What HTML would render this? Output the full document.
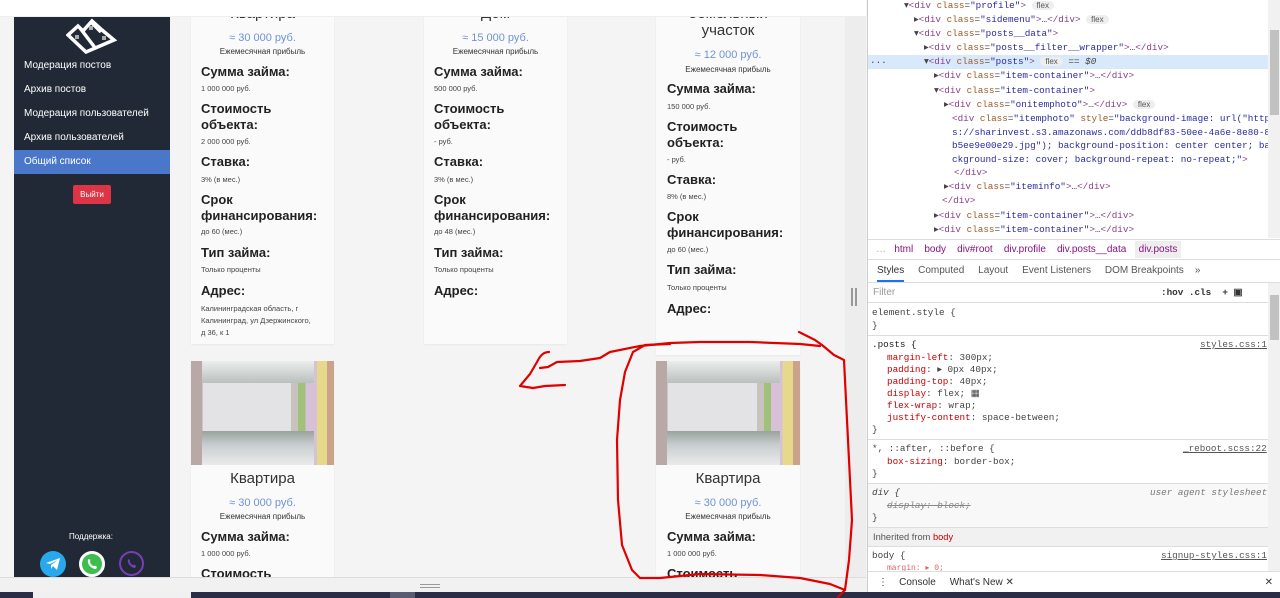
<!DOCTYPE html>
<html><head><meta charset="utf-8"><style>
*{box-sizing:border-box;margin:0;padding:0}
body{width:1280px;height:598px;overflow:hidden;background:#f4f4f4;font-family:"Liberation Sans",Arial,sans-serif;position:relative}
.a{position:absolute;white-space:nowrap}
.side{position:absolute;left:14px;top:0;width:156px;height:577px;background:#212936}
.menu{position:absolute;left:24px;color:#fff;font-size:10px}
.card{position:absolute;background:#fafafa;box-shadow:0 1px 2px rgba(0,0,0,.05)}
.t{position:absolute;font-size:15px;color:#333;text-align:center;width:143px}
.p{position:absolute;font-size:11px;color:#6e93d8;text-align:center;width:143px}
.s{position:absolute;font-size:8px;color:#333;text-align:center;width:143px}
.l{position:absolute;font-size:13px;font-weight:bold;color:#222;line-height:16px}
.v{position:absolute;font-size:7.5px;color:#444;line-height:12px}
.dt{position:absolute;left:867px;top:0;width:413px;height:592px;background:#fff;border-left:1px solid #ccc;font-family:"Liberation Mono",monospace;font-size:9.3px;color:#444}
.dt .r{position:absolute;white-space:nowrap}
.tg{color:#8b3f8a}.at{color:#9a5a2a}.av{color:#2a2aa0}
.badge{display:inline-block;font-family:"Liberation Sans",sans-serif;font-size:8px;background:#eee;border-radius:7px;padding:0 5px;color:#555}
.pn{color:#c80000}
.sans{font-family:"Liberation Sans",sans-serif}
.photo{position:absolute;width:143px;height:104px;background:linear-gradient(90deg,#b8a9a6 0 8%,#e3e3e6 8% 70%,#c9c3c0 70% 75%,#9fc17a 75% 80%,#d8c1d8 80% 88%,#e6d98c 88% 95%,#c9a38a 95%)}
.photo:before{content:"";position:absolute;left:11px;right:20px;top:0;height:22px;background:linear-gradient(#eceded,#b9c0bd)}
.photo:after{content:"";position:absolute;left:11px;right:20px;top:70px;height:34px;background:linear-gradient(#9aa39d,#c7cdcf 40%,#eaeaea)}
</style></head><body>
<div class="a" style="left:0;top:0;width:866px;height:17px;background:#fff;z-index:5;border-bottom:1px solid #eee"></div>
<div class="a" style="left:845px;top:17px;width:21px;height:560px;background:#ededed"></div>
<div class="a" style="left:851px;top:288px;width:2px;height:18px;background:#999"></div>
<div class="a" style="left:855px;top:288px;width:2px;height:18px;background:#999"></div>

<div class="side">
<svg style="position:absolute;left:52px;top:18px" width="52" height="36" viewBox="0 0 52 36"><g fill="none" stroke="#fff" stroke-width="3.5" stroke-linejoin="miter"><path d="M2 17 L12 8 L17 13 L26 3 L36 12 L48 22 L20 34 Z"/><path d="M14 10 L30 31"/><path d="M25 4 L35 14"/></g><rect x="9" y="17" width="4" height="4" fill="#aaa"/><rect x="23" y="8" width="4" height="4" fill="#aaa"/><rect x="36" y="18" width="4" height="4" fill="#aaa"/></svg>
</div>
<div class="menu a" style="top:60px">Модерация постов</div>
<div class="menu a" style="top:84px">Архив постов</div>
<div class="menu a" style="top:108px">Модерация пользователей</div>
<div class="menu a" style="top:132px">Архив пользователей</div>
<div class="a" style="left:14px;top:150px;width:156px;height:24px;background:#4a77c9"></div>
<div class="menu a" style="top:156px">Общий список</div>
<div class="a" style="left:73px;top:185px;width:38px;height:19px;background:#dc3545;border-radius:2px;color:#fff;font-size:8px;text-align:center;line-height:19px">Выйти</div>
<div class="a" style="left:69px;top:532px;color:#fff;font-size:8px">Поддержка:</div>
<div class="a" style="left:40px;top:551px;width:26px;height:26px;border-radius:50%;background:#29a9eb"></div>
<svg class="a" style="left:45px;top:557px" width="16" height="14" viewBox="0 0 16 14"><path d="M1 6 L15 1 L12 13 L8 9 L6 12 L6 8 L13 3 L5 7 Z" fill="#fff"/></svg>
<div class="a" style="left:79px;top:551px;width:26px;height:26px;border-radius:50%;border:3px solid #fff;background:#3cbd4d"></div>
<svg class="a" style="left:85px;top:557px" width="14" height="14" viewBox="0 0 14 14"><path d="M3 3 C4 1 6 3 5 5 C6 8 8 9 9 9 C11 8 13 10 11 12 C7 12 2 8 3 3Z" fill="#fff"/></svg>
<div class="a" style="left:119px;top:551px;width:25px;height:25px;border-radius:50%;border:2.5px solid #7b3db6"></div>
<svg class="a" style="left:125px;top:557px" width="13" height="13" viewBox="0 0 13 13"><path d="M3 3 C4 1 5 3 5 5 C6 7 7 8 8 8 C10 7 12 9 10 11 C7 11 2 7 3 3Z" fill="#7b3db6"/></svg>

<div class="card" style="left:191px;top:0;width:143px;height:344px"></div>
<div class="card" style="left:424px;top:0;width:143px;height:344px"></div>
<div class="card" style="left:656px;top:0;width:144px;height:355px"></div>

<div class="t" style="left:191px;top:5px">Квартира</div>
<div class="p" style="left:191px;top:32px">≈ 30 000 руб.</div>
<div class="s" style="left:191px;top:47px">Ежемесячная прибыль</div>
<div class="l a" style="left:201px;top:64px">Сумма займа:</div>
<div class="v a" style="left:201px;top:83px">1 000 000 руб.</div>
<div class="l a" style="left:201px;top:101px">Стоимость<br>объекта:</div>
<div class="v a" style="left:201px;top:136px">2 000 000 руб.</div>
<div class="l a" style="left:201px;top:154px">Ставка:</div>
<div class="v a" style="left:201px;top:174px">3% (в мес.)</div>
<div class="l a" style="left:201px;top:192px">Срок<br>финансирования:</div>
<div class="v a" style="left:201px;top:226px">до 60 (мес.)</div>
<div class="l a" style="left:201px;top:245px">Тип займа:</div>
<div class="v a" style="left:201px;top:264px">Только проценты</div>
<div class="l a" style="left:201px;top:283px">Адрес:</div>
<div class="v a" style="left:201px;top:303px">Калининградская область, г<br>Калининград, ул Дзержинского,<br>д 36, к 1</div>

<div class="t" style="left:424px;top:5px">Дом</div>
<div class="p" style="left:424px;top:32px">≈ 15 000 руб.</div>
<div class="s" style="left:424px;top:47px">Ежемесячная прибыль</div>
<div class="l a" style="left:434px;top:64px">Сумма займа:</div>
<div class="v a" style="left:434px;top:83px">500 000 руб.</div>
<div class="l a" style="left:434px;top:101px">Стоимость<br>объекта:</div>
<div class="v a" style="left:434px;top:136px">- руб.</div>
<div class="l a" style="left:434px;top:154px">Ставка:</div>
<div class="v a" style="left:434px;top:174px">3% (в мес.)</div>
<div class="l a" style="left:434px;top:192px">Срок<br>финансирования:</div>
<div class="v a" style="left:434px;top:226px">до 48 (мес.)</div>
<div class="l a" style="left:434px;top:245px">Тип займа:</div>
<div class="v a" style="left:434px;top:264px">Только проценты</div>
<div class="l a" style="left:434px;top:283px">Адрес:</div>

<div class="t" style="left:656px;top:5px;width:144px">Земельный</div>
<div class="t" style="left:656px;top:22px;width:144px">участок</div>
<div class="p" style="left:656px;top:49px;width:144px">≈ 12 000 руб.</div>
<div class="s" style="left:656px;top:65px;width:144px">Ежемесячная прибыль</div>
<div class="l a" style="left:667px;top:81px">Сумма займа:</div>
<div class="v a" style="left:667px;top:101px">150 000 руб.</div>
<div class="l a" style="left:667px;top:119px">Стоимость<br>объекта:</div>
<div class="v a" style="left:667px;top:154px">- руб.</div>
<div class="l a" style="left:667px;top:172px">Ставка:</div>
<div class="v a" style="left:667px;top:191px">8% (в мес.)</div>
<div class="l a" style="left:667px;top:209px">Срок<br>финансирования:</div>
<div class="v a" style="left:667px;top:244px">до 60 (мес.)</div>
<div class="l a" style="left:667px;top:262px">Тип займа:</div>
<div class="v a" style="left:667px;top:282px">Только проценты</div>
<div class="l a" style="left:667px;top:301px">Адрес:</div>

<div class="card" style="left:191px;top:361px;width:143px;height:230px"></div>
<div class="photo" style="left:191px;top:361px"></div>
<div class="t" style="left:191px;top:470px">Квартира</div>
<div class="p" style="left:191px;top:497px">≈ 30 000 руб.</div>
<div class="s" style="left:191px;top:512px">Ежемесячная прибыль</div>
<div class="l a" style="left:201px;top:529px">Сумма займа:</div>
<div class="v a" style="left:201px;top:548px">1 000 000 руб.</div>
<div class="l a" style="left:201px;top:566px">Стоимость</div>

<div class="card" style="left:656px;top:361px;width:144px;height:230px"></div>
<div class="photo" style="left:656px;top:361px;width:144px"></div>
<div class="t" style="left:656px;top:470px;width:144px">Квартира</div>
<div class="p" style="left:656px;top:497px;width:144px">≈ 30 000 руб.</div>
<div class="s" style="left:656px;top:512px;width:144px">Ежемесячная прибыль</div>
<div class="l a" style="left:667px;top:529px">Сумма займа:</div>
<div class="v a" style="left:667px;top:548px">1 000 000 руб.</div>
<div class="l a" style="left:667px;top:566px">Стоимость</div>

<div class="a" style="left:0;top:577px;width:866px;height:15px;background:#f1f1f1;border-top:1px solid #ddd"></div>
<div class="a" style="left:420px;top:584px;width:20px;height:1px;background:#999"></div>
<div class="a" style="left:420px;top:587px;width:20px;height:1px;background:#999"></div>
<div class="a" style="left:0;top:592px;width:1280px;height:6px;background:#2b2d48"></div>
<div class="a" style="left:33px;top:592px;width:158px;height:6px;background:#f0f0f0"></div>
<div class="a" style="left:390px;top:592px;width:25px;height:6px;background:#5a5c74"></div>

<div class="dt">
<div class="r" style="left:0;top:55px;width:400px;height:14px;background:#d7e9fb"></div>
<div class="r" style="left:36px;top:0">▾<span class="tg">&lt;div</span> <span class="at">class</span>=<span class="av">"profile"</span><span class="tg">&gt;</span> <span class="badge">flex</span></div>
<div class="r" style="left:46px;top:14px">▸<span class="tg">&lt;div</span> <span class="at">class</span>=<span class="av">"sidemenu"</span><span class="tg">&gt;</span>…<span class="tg">&lt;/div&gt;</span> <span class="badge">flex</span></div>
<div class="r" style="left:46px;top:28px">▾<span class="tg">&lt;div</span> <span class="at">class</span>=<span class="av">"posts__data"</span><span class="tg">&gt;</span></div>
<div class="r" style="left:56px;top:42px">▸<span class="tg">&lt;div</span> <span class="at">class</span>=<span class="av">"posts__filter__wrapper"</span><span class="tg">&gt;</span>…<span class="tg">&lt;/div&gt;</span></div>
<div class="r" style="left:2px;top:57px">···</div>
<div class="r" style="left:56px;top:56px">▾<span class="tg">&lt;div</span> <span class="at">class</span>=<span class="av">"posts"</span><span class="tg">&gt;</span> <span class="badge">flex</span> == <i>$0</i></div>
<div class="r" style="left:66px;top:70px">▸<span class="tg">&lt;div</span> <span class="at">class</span>=<span class="av">"item-container"</span><span class="tg">&gt;</span>…<span class="tg">&lt;/div&gt;</span></div>
<div class="r" style="left:66px;top:85px">▾<span class="tg">&lt;div</span> <span class="at">class</span>=<span class="av">"item-container"</span><span class="tg">&gt;</span></div>
<div class="r" style="left:76px;top:99px">▸<span class="tg">&lt;div</span> <span class="at">class</span>=<span class="av">"onitemphoto"</span><span class="tg">&gt;</span>…<span class="tg">&lt;/div&gt;</span> <span class="badge">flex</span></div>
<div class="r" style="left:84px;top:113px"><span class="tg">&lt;div</span> <span class="at">class</span>=<span class="av">"itemphoto"</span> <span class="at">style</span>=<span class="av">"background-image: url("http</span></div>
<div class="r av" style="left:84px;top:127px">s://sharinvest.s3.amazonaws.com/ddb8df83-50ee-4a6e-8e80-8</div>
<div class="r av" style="left:84px;top:140px">b5ee9e00e29.jpg"); background-position: center center; ba</div>
<div class="r av" style="left:84px;top:154px">ckground-size: cover; background-repeat: no-repeat;"<span class="tg">&gt;</span></div>
<div class="r tg" style="left:86px;top:167px">&lt;/div&gt;</div>
<div class="r" style="left:76px;top:181px">▸<span class="tg">&lt;div</span> <span class="at">class</span>=<span class="av">"iteminfo"</span><span class="tg">&gt;</span>…<span class="tg">&lt;/div&gt;</span></div>
<div class="r tg" style="left:74px;top:195px">&lt;/div&gt;</div>
<div class="r" style="left:66px;top:210px">▸<span class="tg">&lt;div</span> <span class="at">class</span>=<span class="av">"item-container"</span><span class="tg">&gt;</span>…<span class="tg">&lt;/div&gt;</span></div>
<div class="r" style="left:66px;top:224px">▸<span class="tg">&lt;div</span> <span class="at">class</span>=<span class="av">"item-container"</span><span class="tg">&gt;</span>…<span class="tg">&lt;/div&gt;</span></div>
<div class="r" style="left:400px;top:0;width:13px;height:238px;background:#f1f1f1"></div>
<div class="r" style="left:402px;top:30px;width:9px;height:85px;background:#c1c1c1"></div>
<div class="r sans" style="left:0;top:239px;width:413px;height:21px;border-top:1px solid #ddd;border-bottom:1px solid #ddd;font-size:10px;color:#881280;padding-top:4px">
<span style="color:#aaa;margin-left:8px">…</span>&nbsp;&nbsp;&nbsp;html&nbsp;&nbsp;&nbsp; body&nbsp;&nbsp;&nbsp; div#root&nbsp;&nbsp;&nbsp; div.profile&nbsp;&nbsp;&nbsp; div.posts__data&nbsp;&nbsp; <span style="background:#eee;padding:3px 4px">div.posts</span></div>
<div class="r sans" style="left:0;top:261px;width:413px;height:22px;border-bottom:1px solid #ddd;font-size:10px;color:#555;padding-top:4px">
<span style="margin-left:9px;color:#333;border-bottom:2px solid #1a73e8;padding-bottom:4px">Styles</span>&nbsp;&nbsp;&nbsp;&nbsp; Computed&nbsp;&nbsp;&nbsp;&nbsp; Layout&nbsp;&nbsp;&nbsp;&nbsp; Event Listeners&nbsp;&nbsp;&nbsp;&nbsp; DOM Breakpoints&nbsp;&nbsp;&nbsp; »</div>
<div class="r sans" style="left:5px;top:287px;width:280px;height:14px;color:#999;font-size:10px">Filter</div>
<div class="r" style="left:293px;top:287px;color:#333;font-weight:bold">:hov .cls &nbsp;+ ▣</div>
<div class="r" style="left:0;top:302px;width:400px;height:1px;background:#ddd"></div>
<div class="r" style="left:4px;top:307px">element.style {</div>
<div class="r" style="left:4px;top:320px">}</div>
<div class="r" style="left:0;top:335px;width:400px;height:1px;background:#ddd"></div>
<div class="r" style="left:4px;top:339px;color:#222">.posts {</div>
<div class="r" style="left:332px;top:339px;text-decoration:underline;color:#555">styles.css:1</div>
<div class="r" style="left:19px;top:352px"><span class="pn">margin-left</span>: 300px;</div>
<div class="r" style="left:19px;top:364px"><span class="pn">padding</span>: ▸ 0px 40px;</div>
<div class="r" style="left:19px;top:376px"><span class="pn">padding-top</span>: 40px;</div>
<div class="r" style="left:19px;top:388px"><span class="pn">display</span>: flex; ▦</div>
<div class="r" style="left:19px;top:400px"><span class="pn">flex-wrap</span>: wrap;</div>
<div class="r" style="left:19px;top:412px"><span class="pn">justify-content</span>: space-between;</div>
<div class="r" style="left:4px;top:424px">}</div>
<div class="r" style="left:0;top:439px;width:400px;height:1px;background:#ddd"></div>
<div class="r" style="left:4px;top:443px">*, ::after, ::before {</div>
<div class="r" style="left:315px;top:443px;text-decoration:underline;color:#555">_reboot.scss:22</div>
<div class="r" style="left:19px;top:456px"><span class="pn">box-sizing</span>: border-box;</div>
<div class="r" style="left:4px;top:468px">}</div>
<div class="r" style="left:0;top:483px;width:400px;height:44px;background:#f8f8f8;border-top:1px solid #ddd"></div>
<div class="r" style="left:4px;top:487px"><i>div {</i></div>
<div class="r" style="left:282px;top:487px;color:#777"><i>user agent stylesheet</i></div>
<div class="r" style="left:19px;top:500px;text-decoration:line-through;color:#888"><i>display: block;</i></div>
<div class="r" style="left:4px;top:512px">}</div>
<div class="r sans" style="left:0;top:527px;width:400px;height:20px;background:#f1f1f1;border-top:1px solid #ddd;border-bottom:1px solid #ddd;padding:4px 5px;color:#555">Inherited from <span style="color:#c80000">body</span></div>
<div class="r" style="left:4px;top:550px">body {</div>
<div class="r" style="left:293px;top:550px;text-decoration:underline;color:#555">signup-styles.css:1</div>
<div class="r" style="left:19px;top:563px;color:#d66;font-size:8px">margin: ▸ 0;</div>
<div class="r" style="left:400px;top:283px;width:13px;height:288px;background:#f1f1f1"></div>
<div class="r" style="left:402px;top:295px;width:9px;height:45px;background:#c1c1c1"></div>
<div class="r sans" style="left:0;top:571px;width:413px;height:21px;background:#fff;border-top:1px solid #ddd;font-size:10px;color:#333;padding-top:5px"><span style="margin-left:10px">⋮</span>&nbsp;&nbsp;&nbsp; Console&nbsp;&nbsp;&nbsp;&nbsp; What's New ✕<span style="position:absolute;right:8px">✕</span></div>
</div>

<svg class="a" style="left:0;top:0;z-index:10" width="1280" height="598" viewBox="0 0 1280 598">
<g fill="none" stroke="#e00000" stroke-width="2.2" stroke-linecap="round" stroke-linejoin="round">
<path d="M549 352 C543 352 540 356 537 362 L530 374 L520 386 L533 388 L545 386 L565 385"/>
<path d="M540 368 L548 367 L557 362 L580 361 L600 358 L610 352 L640 346 L670 343 L700 342 L750 342 L800 344 L820 346"/>
<path d="M799 332 L815 340 L822 345 L834 355 L844 360 L846 400 L848 440 L850 480 L852 520 L849 560 L845 590 L838 597"/>
<path d="M845 590 L830 584 L800 578 L760 575 L700 574 L660 578 L640 578 L632 570 L622 545 L618 500 L617 440 L620 400 L625 372 L633 352 L645 345 L670 344"/>
</g></svg>
</body></html>
